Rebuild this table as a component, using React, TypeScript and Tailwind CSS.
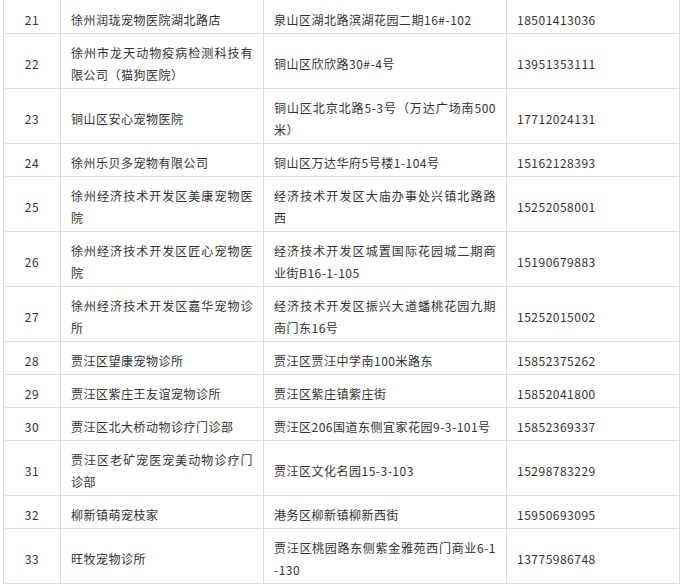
const rows: [string, string, string, string][] = [
  ['21', '徐州润珑宠物医院湖北路店', '泉山区湖北路滨湖花园二期16#-102', '18501413036'],
  ['22', '徐州市龙天动物疫病检测科技有限公司（猫狗医院）', '铜山区欣欣路30#-4号', '13951353111'],
  ['23', '铜山区安心宠物医院', '铜山区北京北路5-3号（万达广场南500米）', '17712024131'],
  ['24', '徐州乐贝多宠物有限公司', '铜山区万达华府5号楼1-104号', '15162128393'],
  ['25', '徐州经济技术开发区美康宠物医院', '经济技术开发区大庙办事处兴镇北路路西', '15252058001'],
  ['26', '徐州经济技术开发区匠心宠物医院', '经济技术开发区城置国际花园城二期商业街B16-1-105', '15190679883'],
  ['27', '徐州经济技术开发区嘉华宠物诊所', '经济技术开发区振兴大道蟠桃花园九期南门东16号', '15252015002'],
  ['28', '贾汪区望康宠物诊所', '贾汪区贾汪中学南100米路东', '15852375262'],
  ['29', '贾汪区紫庄王友谊宠物诊所', '贾汪区紫庄镇紫庄街', '15852041800'],
  ['30', '贾汪区北大桥动物诊疗门诊部', '贾汪区206国道东侧宜家花园9-3-101号', '15852369337'],
  ['31', '贾汪区老矿宠医宠美动物诊疗门诊部', '贾汪区文化名园15-3-103', '15298783229'],
  ['32', '柳新镇萌宠枝家', '港务区柳新镇柳新西街', '15950693095'],
  ['33', '旺牧宠物诊所', '贾汪区桃园路东侧紫金雅苑西门商业6-1-130', '13775986748'],
];

export default function App() {
  return (
    <div className="bg-white pl-[3px]">
      <table
        className="border-collapse table-fixed w-[677px] text-[12px] leading-[22px] tracking-[0.5px] text-[#333]"
        style={{ fontFamily: '"Noto Sans CJK SC", "Noto Sans", sans-serif' }}
      >
        <colgroup>
          <col className="w-[57px]" />
          <col className="w-[203px]" />
          <col className="w-[243px]" />
          <col className="w-[173px]" />
        </colgroup>
        <tbody>
          {rows.map(([no, name, addr, phone], i) => {
            // first row's top edge is cut off in the screenshot
            const cell =
              'border border-[#dcdcdc] px-[10px] pt-[8px] pb-[2px] ' +
              (i === 0 ? 'border-t-white' : '');
            return (
              <tr key={no}>
                <td className={cell + ' text-center'}>{no}</td>
                <td className={cell + ' text-justify break-all'}>{name}</td>
                <td className={cell + ' text-justify break-all'}>{addr}</td>
                <td className={cell}>{phone}</td>
              </tr>
            );
          })}
        </tbody>
      </table>
    </div>
  );
}
